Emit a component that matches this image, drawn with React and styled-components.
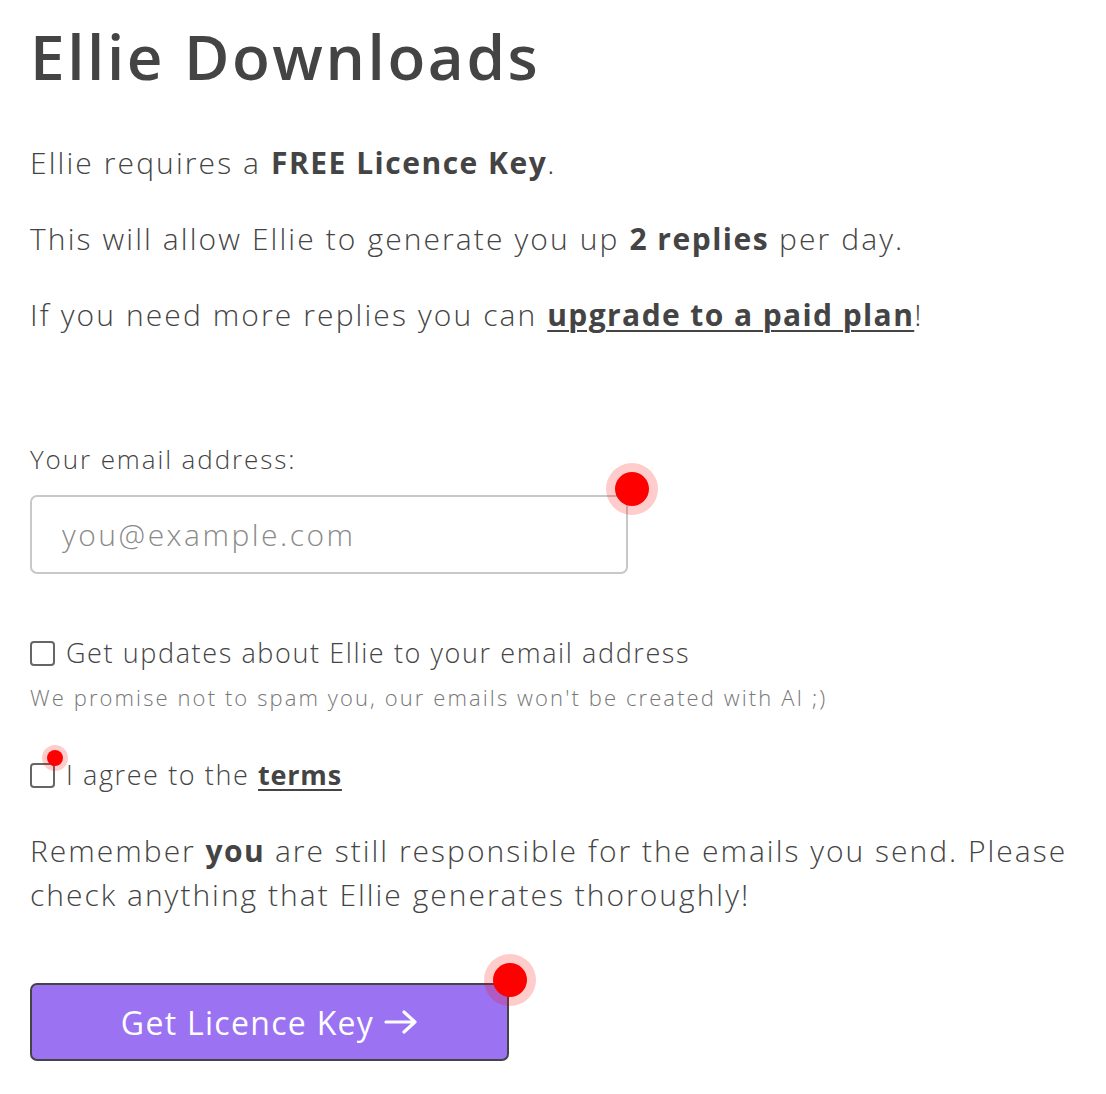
import styled, { createGlobalStyle } from "styled-components";

const GlobalStyle = createGlobalStyle`
  html, body {
    margin: 0;
    padding: 0;
    background: #ffffff;
  }
  body {
    font-family: "Open Sans", "DejaVu Sans", sans-serif;
    color: #444444;
  }
`;

const Page = styled.main`
  padding: 18px 30px 40px;
  display: flex;
  flex-direction: column;
`;

const Title = styled.h1`
  margin: 0 0 50px;
  font-size: 62px;
  line-height: 76px;
  font-weight: 600;
  color: #444444;
  letter-spacing: 2.6px;
`;

const Para = styled.p`
  margin: 0 0 38px;
  font-size: 30px;
  line-height: 38px;
  font-weight: 300;
  color: #444444;
  letter-spacing: 2.1px;

  b {
    font-weight: 700;
    letter-spacing: 1.5px;
  }

  a {
    color: #444444;
    font-weight: 700;
    letter-spacing: 1.4px;
    text-decoration: underline;
    text-underline-offset: 4px;
    text-decoration-thickness: 2px;
  }
`;

const Form = styled.form`
  display: flex;
  flex-direction: column;
  margin-top: 71px;
`;

const Label = styled.label`
  font-size: 26px;
  line-height: 32px;
  font-weight: 300;
  color: #444444;
  letter-spacing: 1.9px;
  margin-bottom: 20px;
`;

const InputWrap = styled.div`
  position: relative;
  width: 598px;
`;

const EmailInput = styled.input`
  box-sizing: border-box;
  width: 100%;
  height: 79px;
  border: 2px solid #c8c8c8;
  border-radius: 7px;
  padding: 0 30px;
  font-family: inherit;
  font-size: 30px;
  font-weight: 300;
  color: #444444;
  letter-spacing: 2.5px;
  outline: none;

  &::placeholder {
    color: #8a8a8a;
  }
`;

const Marker = styled.span`
  position: absolute;
  width: ${(p) => p.$size}px;
  height: ${(p) => p.$size}px;
  border-radius: 50%;
  background: #ff0000;
  box-shadow: 0 0 0 ${(p) => p.$halo}px rgba(255, 0, 0, 0.2);
  top: ${(p) => p.$top}px;
  left: ${(p) => p.$left}px;
  pointer-events: none;
`;

const CheckRow = styled.label`
  position: relative;
  display: flex;
  align-items: center;
  gap: 11px;
  font-size: 27px;
  line-height: 32px;
  font-weight: 300;
  color: #444444;
  letter-spacing: 1.6px;
  white-space: pre;
  margin-top: ${(p) => p.$top}px;

  a {
    color: #444444;
    font-weight: 700;
    letter-spacing: 0.8px;
    text-decoration: underline;
    text-underline-offset: 4px;
    text-decoration-thickness: 2px;
  }
`;

const Box = styled.span`
  box-sizing: border-box;
  width: 25px;
  height: 25px;
  border: 2px solid #666666;
  border-radius: 4px;
  flex-shrink: 0;
`;

const Hint = styled.p`
  margin: 14px 0 0;
  font-size: 22px;
  line-height: 28px;
  font-weight: 300;
  color: #777777;
  letter-spacing: 2.1px;
`;

const Notice = styled.p`
  margin: 38px 0 0;
  font-size: 30px;
  line-height: 44px;
  font-weight: 300;
  color: #444444;
  letter-spacing: 2px;

  b {
    font-weight: 700;
    letter-spacing: 1.4px;
  }
`;

const ButtonWrap = styled.div`
  position: relative;
  width: 479px;
  margin-top: 66px;
`;

const Button = styled.button`
  box-sizing: border-box;
  width: 100%;
  height: 78px;
  background: #9b72f2;
  border: 2px solid #444444;
  border-radius: 7px;
  color: #ffffff;
  font-family: inherit;
  font-size: 32px;
  font-weight: 500;
  letter-spacing: 1.3px;
  display: flex;
  align-items: center;
  justify-content: center;
  gap: 10px;
  cursor: pointer;
`;

function Arrow() {
  return (
    <svg width="34" height="24" viewBox="0 0 34 24" fill="none" stroke="#fff" strokeWidth="3.2" strokeLinecap="round" strokeLinejoin="round">
      <path d="M2 12h29M20 2l11 10-11 10" />
    </svg>
  );
}

export default function App() {
  return (
    <>
      <GlobalStyle />
      <Page>
        <Title>Ellie Downloads</Title>
        <Para>
          Ellie requires a <b>FREE Licence Key</b>.
        </Para>
        <Para>
          This will allow Ellie to generate you up <b>2 replies</b> per day.
        </Para>
        <Para>
          If you need more replies you can <a href="#">upgrade to a paid plan</a>!
        </Para>

        <Form onSubmit={(e) => e.preventDefault()}>
          <Label htmlFor="email">Your email address:</Label>
          <InputWrap>
            <EmailInput id="email" type="email" placeholder="you@example.com" />
            <Marker $size={34} $halo={9} $top={-23} $left={585} />
          </InputWrap>

          <CheckRow $top={63}>
            <Box />
            Get updates about Ellie to your email address
          </CheckRow>
          <Hint>We promise not to spam you, our emails won't be created with AI ;)</Hint>

          <CheckRow $top={48}>
            <Box />
            <span>
              I agree to the <a href="#">terms</a>
            </span>
            <Marker $size={16} $halo={5} $top={-9} $left={17} />
          </CheckRow>

          <Notice>
            Remember <b>you</b> are still responsible for the emails you send. Please check anything that Ellie generates thoroughly!
          </Notice>

          <ButtonWrap>
            <Button type="submit">
              Get Licence Key <Arrow />
            </Button>
            <Marker $size={34} $halo={9} $top={-20} $left={463} />
          </ButtonWrap>
        </Form>
      </Page>
    </>
  );
}
